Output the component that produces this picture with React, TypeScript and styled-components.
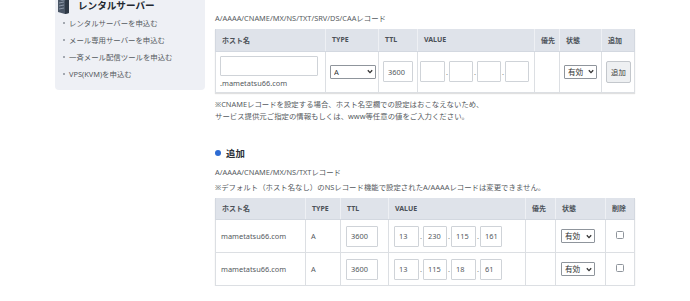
import React from "react";
import styled, { createGlobalStyle } from "styled-components";

const GlobalStyle = createGlobalStyle`
  html, body {
    margin: 0;
    padding: 0;
    background: #ffffff;
  }
  body {
    font-family: "Noto Sans", "Noto Sans CJK JP", sans-serif;
    font-size: 7.4px;
    color: #555a60;
    overflow: hidden;
  }
`;

const Page = styled.div`
  display: flex;
  align-items: flex-start;
  gap: 10px;
  padding-left: 55px;
  margin-top: -14px;
`;

const Sidebar = styled.aside`
  width: 150px;
  box-sizing: border-box;
  background: #eef0f5;
  border-radius: 4px;
  padding: 10px 0 8px 0;
`;

const SideTitle = styled.h3`
  display: flex;
  align-items: center;
  gap: 8px;
  height: 18px;
  margin: 0 0 0 2px;
  font-size: 9.6px;
  font-weight: bold;
  color: #222831;
`;

const SideList = styled.ul`
  list-style: none;
  margin: 0;
  padding: 0 0 0 8px;
`;

const SideItem = styled.li`
  display: flex;
  align-items: center;
  gap: 4px;
  height: 17px;
  color: #555a60;

  &::before {
    content: "";
    width: 2px;
    height: 2px;
    border-radius: 50%;
    background: #8a9099;
  }
`;

const Main = styled.main`
  width: 419px;
  padding-top: 26px;
`;

const Caption = styled.p<{ $gap?: number }>`
  margin: 0 0 ${({ $gap }) => $gap ?? 0}px 0;
  line-height: ${({ $gap }) => ($gap !== undefined ? 12 : 15)}px;
  color: #555a60;
`;

const Note = styled.p`
  margin: 5px 0 0 0;
  line-height: 12px;
`;

const SectionTitle = styled.h4`
  display: flex;
  align-items: center;
  gap: 5px;
  height: 14px;
  margin: 24px 0 5px 0;
  font-size: 9.4px;
  font-weight: bold;
  color: #2a2f36;

  &::before {
    content: "";
    width: 6px;
    height: 6px;
    border-radius: 50%;
    background: #2d6bd3;
  }
`;

const Table = styled.table<{ $mt?: number }>`
  width: 419px;
  table-layout: fixed;
  border-collapse: collapse;
  margin-top: ${({ $mt }) => $mt ?? 0}px;
  box-shadow: 0 1px 1px rgba(0, 0, 0, 0.12);
`;

const Col = styled.col<{ $w: number }>`
  width: ${({ $w }) => $w}px;
`;

const Th = styled.th`
  height: 22px;
  padding: 0 6px;
  box-sizing: border-box;
  background: #dfe3ea;
  border: 1px solid #d3d8e0;
  border-top: none;
  border-right-color: #eef0f4;
  text-align: left;
  white-space: nowrap;
  font-size: 7px;
  font-weight: bold;
  color: #4b5158;

  &:last-child {
    border-right-color: #d3d8e0;
  }
`;

const Tr = styled.tr<{ $h: number }>`
  height: ${({ $h }) => $h}px;
`;

const Td = styled.td<{ $pad?: number }>`
  padding: 0 ${({ $pad }) => $pad ?? 5}px;
  border: 1px solid #dcdfe3;
  vertical-align: middle;
  white-space: nowrap;
  color: #555a60;
`;

const CenterTd = styled(Td)`
  text-align: center;
`;

const TextInput = styled.input<{ $w: number; $h?: number }>`
  box-sizing: border-box;
  width: ${({ $w }) => $w}px;
  height: ${({ $h }) => $h ?? 21}px;
  padding: 0 4px;
  border: 1px solid #cfd3d8;
  border-radius: 1px;
  font-family: inherit;
  font-size: 7.4px;
  color: #555a60;
  background: #fff;
  outline: none;
`;

const HostCell = styled.div`
  display: flex;
  flex-direction: column;
  gap: 2px;
`;

const Domain = styled.span`
  line-height: 10px;
`;

const IpRow = styled.div`
  display: flex;
  align-items: center;
`;

const Dot = styled.span`
  width: 4px;
  text-align: center;
  color: #888;
`;

const SelectBox = styled.label<{ $w: number }>`
  position: relative;
  display: inline-flex;
  width: ${({ $w }) => $w}px;
  height: 14px;
`;

const NativeSelect = styled.select`
  appearance: none;
  box-sizing: border-box;
  width: 100%;
  height: 100%;
  padding: 0 0 0 3px;
  border: 1px solid #8f959c;
  border-radius: 1px;
  background: #fff;
  font-family: inherit;
  font-size: 7.6px;
  color: #333;
  outline: none;
`;

const Chevron = styled.svg`
  position: absolute;
  right: 3px;
  top: 4.5px;
  width: 6px;
  height: 5px;
  pointer-events: none;
`;

const AddButton = styled.button`
  box-sizing: border-box;
  width: 25px;
  height: 22px;
  padding: 0;
  border: 1px solid #c3c7cc;
  border-radius: 2px;
  background: #eef0f2;
  font-family: inherit;
  font-size: 7.4px;
  color: #444;
`;

const Check = styled.input`
  appearance: none;
  width: 8px;
  height: 8px;
  margin: 0;
  border: 1px solid #8f959c;
  border-radius: 1.5px;
  background: #fff;
`;

const Select = ({ value, options, w }: { value: string; options: string[]; w: number }) => (
  <SelectBox $w={w}>
    <NativeSelect defaultValue={value}>
      {options.map((o) => (
        <option key={o}>{o}</option>
      ))}
    </NativeSelect>
    <Chevron viewBox="0 0 6 5">
      <path d="M0.8 1.2 L3 3.6 L5.2 1.2" fill="none" stroke="#333" strokeWidth="1.3" />
    </Chevron>
  </SelectBox>
);

const IpInputs = ({ values, widths }: { values: string[]; widths: number[] }) => (
  <IpRow>
    {values.map((v, i) => (
      <React.Fragment key={i}>
        {i > 0 && <Dot>.</Dot>}
        <TextInput $w={widths[i]} defaultValue={v} />
      </React.Fragment>
    ))}
  </IpRow>
);

const ServerIcon = () => (
  <svg width="13" height="18" viewBox="0 0 13 18">
    <path d="M1 3 L8 1 L12 3 L12 17 L8 18 L1 16 Z" fill="#4a5666" />
    <path d="M8 1 L12 3 L12 17 L8 18 Z" fill="#2d3845" />
    <path d="M1 3 L8 1 L12 3 L5 5 Z" fill="#7d8a9b" />
    <path d="M2 7 L7 6 M2 10 L7 9 M2 13 L7 12" stroke="#9aa7b8" strokeWidth="0.8" />
  </svg>
);

const records = [
  { host: "mametatsu66.com", ip: ["13", "230", "115", "161"] },
  { host: "mametatsu66.com", ip: ["13", "115", "18", "61"] },
];

const sideLinks = [
  "レンタルサーバーを申込む",
  "メール専用サーバーを申込む",
  "一斉メール配信ツールを申込む",
  "VPS(KVM)を申込む",
];

export default function App() {
  return (
    <>
      <GlobalStyle />
      <Page>
        <Sidebar>
          <SideTitle>
            <ServerIcon />
            レンタルサーバー
          </SideTitle>
          <SideList>
            {sideLinks.map((l) => (
              <SideItem key={l}>{l}</SideItem>
            ))}
          </SideList>
        </Sidebar>

        <Main>
          <Caption $gap={5}>A/AAAA/CNAME/MX/NS/TXT/SRV/DS/CAAレコード</Caption>
          <Table>
            <colgroup>
              <Col $w={110} />
              <Col $w={53} />
              <Col $w={39} />
              <Col $w={117} />
              <Col $w={25} />
              <Col $w={42} />
              <Col $w={33} />
            </colgroup>
            <thead>
              <tr>
                <Th>ホスト名</Th>
                <Th>TYPE</Th>
                <Th>TTL</Th>
                <Th>VALUE</Th>
                <Th>優先</Th>
                <Th>状態</Th>
                <Th>追加</Th>
              </tr>
            </thead>
            <tbody>
              <Tr $h={41}>
                <Td $pad={4}>
                  <HostCell>
                    <TextInput $w={98} $h={20} />
                    <Domain>.mametatsu66.com</Domain>
                  </HostCell>
                </Td>
                <Td $pad={4}>
                  <Select value="A" options={["A", "AAAA", "CNAME", "MX", "NS", "TXT", "SRV", "DS", "CAA"]} w={46} />
                </Td>
                <Td $pad={4}>
                  <TextInput $w={30} defaultValue="3600" />
                </Td>
                <Td $pad={2}>
                  <IpInputs values={["", "", "", ""]} widths={[25, 24, 24, 24]} />
                </Td>
                <Td />
                <Td $pad={4}>
                  <Select value="有効" options={["有効", "無効"]} w={33} />
                </Td>
                <Td $pad={4}>
                  <AddButton>追加</AddButton>
                </Td>
              </Tr>
            </tbody>
          </Table>
          <Note>
            ※CNAMEレコードを設定する場合、ホスト名空欄での設定はおこなえないため、
            <br />
            サービス提供元ご指定の情報もしくは、www等任意の値をご入力ください。
          </Note>

          <SectionTitle>追加</SectionTitle>
          <Caption>A/AAAA/CNAME/MX/NS/TXTレコード</Caption>
          <Caption>※デフォルト（ホスト名なし）のNSレコード機能で設定されたA/AAAAレコードは変更できません。</Caption>
          <Table $mt={3}>
            <colgroup>
              <Col $w={90} />
              <Col $w={35} />
              <Col $w={48} />
              <Col $w={137} />
              <Col $w={30} />
              <Col $w={50} />
              <Col $w={29} />
            </colgroup>
            <thead>
              <tr>
                <Th>ホスト名</Th>
                <Th>TYPE</Th>
                <Th>TTL</Th>
                <Th>VALUE</Th>
                <Th>優先</Th>
                <Th>状態</Th>
                <Th>削除</Th>
              </tr>
            </thead>
            <tbody>
              {records.map((r, i) => (
                <Tr $h={33} key={i}>
                  <Td>{r.host}</Td>
                  <Td>A</Td>
                  <Td>
                    <TextInput $w={32} defaultValue="3600" />
                  </Td>
                  <Td>
                    <IpInputs values={r.ip} widths={[25, 24, 25, 22]} />
                  </Td>
                  <Td />
                  <Td>
                    <Select value="有効" options={["有効", "無効"]} w={34} />
                  </Td>
                  <CenterTd>
                    <Check type="checkbox" />
                  </CenterTd>
                </Tr>
              ))}
            </tbody>
          </Table>
        </Main>
      </Page>
    </>
  );
}
